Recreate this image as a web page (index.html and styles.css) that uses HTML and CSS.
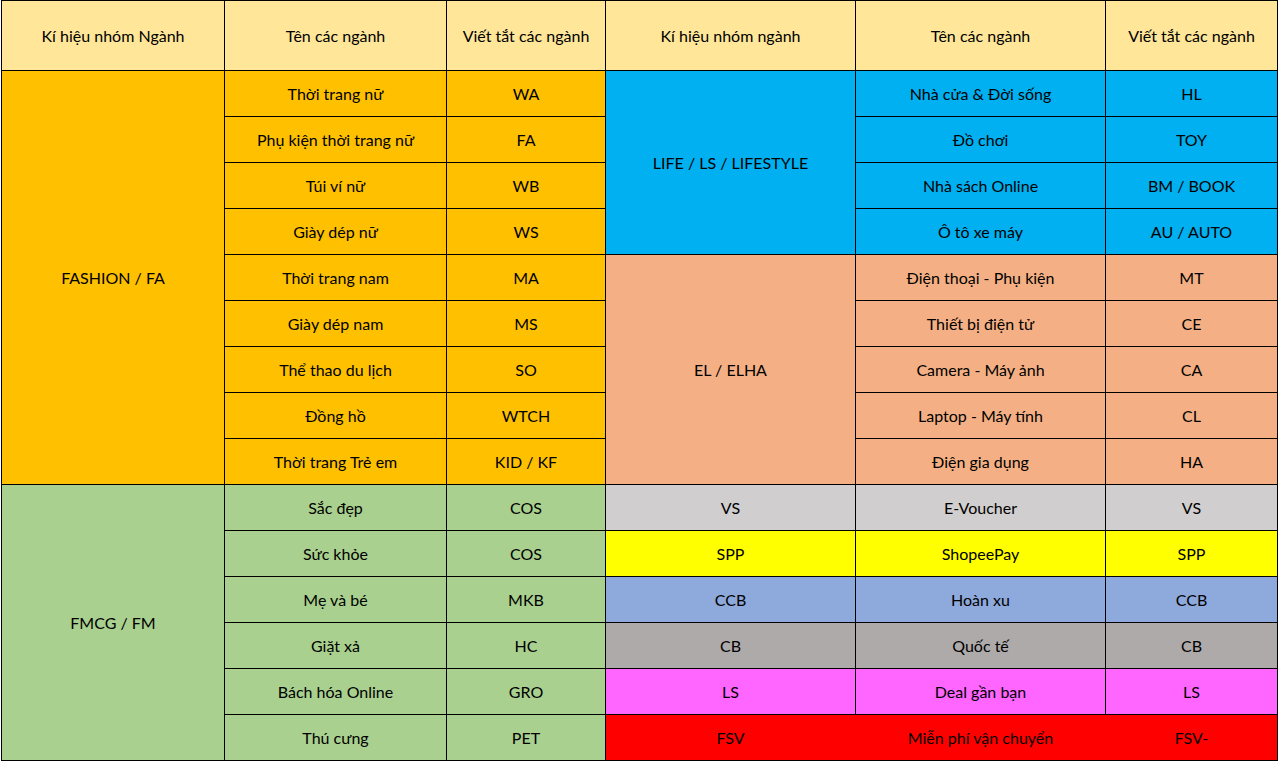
FILE: index.html
```html
<!DOCTYPE html>
<html lang="vi">
<head>
<meta charset="utf-8">
<title>Kí hiệu nhóm ngành</title>
<link rel="stylesheet" href="styles.css">
</head>
<body>
<div class="sheet">
<table class="grid">
  <colgroup>
    <col class="c1"><col class="c2"><col class="c3"><col class="c4"><col class="c5"><col class="c6">
  </colgroup>
  <thead>
    <tr class="head">
      <th>Kí hiệu nhóm Ngành</th>
      <th>Tên các ngành</th>
      <th>Viết tắt các ngành</th>
      <th>Kí hiệu nhóm ngành</th>
      <th>Tên các ngành</th>
      <th>Viết tắt các ngành</th>
    </tr>
  </thead>
  <tbody>
    <tr>
      <td class="fa" rowspan="9">FASHION / FA</td>
      <td class="fa">Thời trang nữ</td><td class="fa">WA</td>
      <td class="ls" rowspan="4">LIFE / LS / LIFESTYLE</td>
      <td class="ls">Nhà cửa &amp; Đời sống</td><td class="ls">HL</td>
    </tr>
    <tr>
      <td class="fa">Phụ kiện thời trang nữ</td><td class="fa">FA</td>
      <td class="ls">Đồ chơi</td><td class="ls">TOY</td>
    </tr>
    <tr>
      <td class="fa">Túi ví nữ</td><td class="fa">WB</td>
      <td class="ls">Nhà sách Online</td><td class="ls">BM / BOOK</td>
    </tr>
    <tr>
      <td class="fa">Giày dép nữ</td><td class="fa">WS</td>
      <td class="ls">Ô tô xe máy</td><td class="ls">AU / AUTO</td>
    </tr>
    <tr>
      <td class="fa">Thời trang nam</td><td class="fa">MA</td>
      <td class="el" rowspan="5">EL / ELHA</td>
      <td class="el">Điện thoại - Phụ kiện</td><td class="el">MT</td>
    </tr>
    <tr>
      <td class="fa">Giày dép nam</td><td class="fa">MS</td>
      <td class="el">Thiết bị điện tử</td><td class="el">CE</td>
    </tr>
    <tr>
      <td class="fa">Thể thao du lịch</td><td class="fa">SO</td>
      <td class="el">Camera - Máy ảnh</td><td class="el">CA</td>
    </tr>
    <tr>
      <td class="fa">Đồng hồ</td><td class="fa">WTCH</td>
      <td class="el">Laptop - Máy tính</td><td class="el">CL</td>
    </tr>
    <tr>
      <td class="fa">Thời trang Trẻ em</td><td class="fa">KID / KF</td>
      <td class="el">Điện gia dụng</td><td class="el">HA</td>
    </tr>
    <tr>
      <td class="fm" rowspan="6">FMCG / FM</td>
      <td class="fm">Sắc đẹp</td><td class="fm">COS</td>
      <td class="vs">VS</td><td class="vs">E-Voucher</td><td class="vs">VS</td>
    </tr>
    <tr>
      <td class="fm">Sức khỏe</td><td class="fm">COS</td>
      <td class="spp">SPP</td><td class="spp">ShopeePay</td><td class="spp">SPP</td>
    </tr>
    <tr>
      <td class="fm">Mẹ và bé</td><td class="fm">MKB</td>
      <td class="ccb">CCB</td><td class="ccb">Hoàn xu</td><td class="ccb">CCB</td>
    </tr>
    <tr>
      <td class="fm">Giặt xả</td><td class="fm">HC</td>
      <td class="cb">CB</td><td class="cb">Quốc tế</td><td class="cb">CB</td>
    </tr>
    <tr>
      <td class="fm">Bách hóa Online</td><td class="fm">GRO</td>
      <td class="lsp">LS</td><td class="lsp">Deal gần bạn</td><td class="lsp">LS</td>
    </tr>
    <tr class="last">
      <td class="fm">Thú cưng</td><td class="fm">PET</td>
      <td class="fsv first">FSV</td><td class="fsv mid">Miễn phí vận chuyển</td><td class="fsv end">FSV-</td>
    </tr>
  </tbody>
</table>
</div>
</body>
</html>
```

FILE: styles.css
```css
html, body {
  margin: 0;
  padding: 0;
  background: #ffffff;
}
.sheet {
  padding-left: 1px;
}
.grid {
  border-collapse: collapse;
  table-layout: fixed;
  width: 1277px;
  font-family: Lato, "Open Sans", "Liberation Sans", sans-serif;
  font-size: 16px;
  color: #000;
}
.c1 { width: 223px; }
.c2 { width: 222px; }
.c3 { width: 159px; }
.c4 { width: 250px; }
.c5 { width: 250px; }
.c6 { width: 172px; }

.grid th,
.grid td {
  border: 1px solid #000;
  padding: 0 2px;
  text-align: center;
  vertical-align: middle;
  font-weight: normal;
  white-space: nowrap;
  overflow: hidden;
  line-height: 18px;
}
.head th {
  height: 69px;
  background: #ffe699;
}
.grid tbody tr {
  height: 46px;
}

.fa  { background: #ffc000; }
.ls  { background: #00b0f0; }
.el  { background: #f4b084; }
.fm  { background: #a9d08e; }
.vs  { background: #d0cece; }
.spp { background: #ffff00; }
.ccb { background: #8ea9db; }
.cb  { background: #aeaaaa; }
.lsp { background: #ff66ff; }
.fsv { background: #ff0000; }

.grid td.fsv.first { border-right: 1px solid #ff0000; }
.grid td.fsv.mid { border-left: 1px solid #ff0000; border-right: 1px solid #ff0000; }
.grid td.fsv.end { border-left: 1px solid #ff0000; }
```
